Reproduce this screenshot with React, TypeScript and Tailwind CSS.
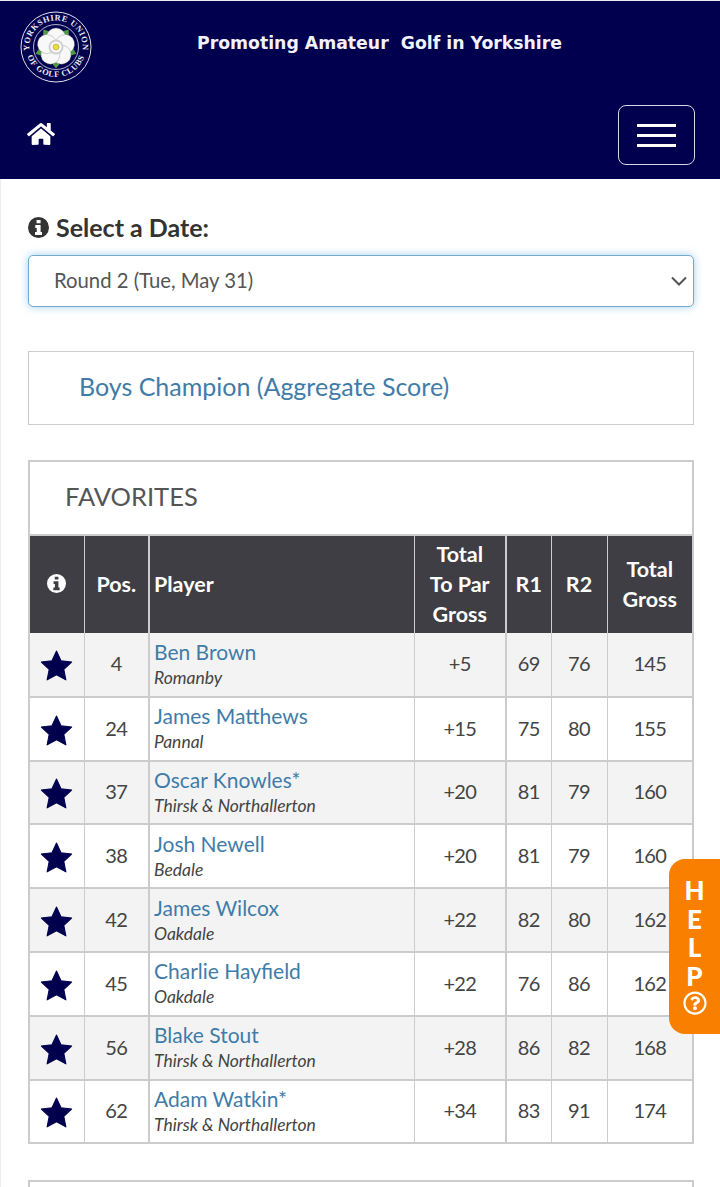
import { FaHome, FaRegQuestionCircle } from "react-icons/fa";

const PLAYERS = [
  { pos: 4, name: "Ben Brown", club: "Romanby", par: "+5", r1: 69, r2: 76, total: 145 },
  { pos: 24, name: "James Matthews", club: "Pannal", par: "+15", r1: 75, r2: 80, total: 155 },
  { pos: 37, name: "Oscar Knowles*", club: "Thirsk & Northallerton", par: "+20", r1: 81, r2: 79, total: 160 },
  { pos: 38, name: "Josh Newell", club: "Bedale", par: "+20", r1: 81, r2: 79, total: 160 },
  { pos: 42, name: "James Wilcox", club: "Oakdale", par: "+22", r1: 82, r2: 80, total: 162 },
  { pos: 45, name: "Charlie Hayfield", club: "Oakdale", par: "+22", r1: 76, r2: 86, total: 162 },
  { pos: 56, name: "Blake Stout", club: "Thirsk & Northallerton", par: "+28", r1: 86, r2: 82, total: 168 },
  { pos: 62, name: "Adam Watkin*", club: "Thirsk & Northallerton", par: "+34", r1: 83, r2: 91, total: 174 },
];

const Logo = () => (
  <svg viewBox="0 0 72 72" className="w-[72px] h-[72px] shrink-0">
    <defs>
      <path id="logo-top" d="M 10.5 44 A 26.7 26.7 0 1 1 61.5 44" />
      <path id="logo-bottom" d="M 6 36 A 30 30 0 0 0 66 36" />
    </defs>
    <circle cx="36" cy="36" r="35" fill="#00004f" stroke="#e0e0ee" strokeWidth="1" />
    <circle cx="36" cy="36" r="22.5" fill="none" stroke="#e0e0ee" strokeWidth="0.8" />
    <text fill="#eeeef6" fontSize="8.3" fontWeight="700" fontFamily="'Liberation Serif', serif" letterSpacing="0.7">
      <textPath href="#logo-top" startOffset="50%" textAnchor="middle">YORKSHIRE UNION</textPath>
    </text>
    <text fill="#eeeef6" fontSize="8.3" fontWeight="700" fontFamily="'Liberation Serif', serif" letterSpacing="0.7">
      <textPath href="#logo-bottom" startOffset="50%" textAnchor="middle">OF GOLF CLUBS</textPath>
    </text>
    {[0, 72, 144, 216, 288].map((a) => (
      <path key={a} d="M36 30 L32.5 19 L36 14.5 L39.5 19 Z" fill="#4f9a45" transform={`rotate(${a + 36} 36 36)`} />
    ))}
    {[0, 72, 144, 216, 288].map((a) => (
      <circle key={a} cx="36" cy="26.5" r="9.5" fill="#f8f8f8" stroke="#777" strokeWidth="0.3" transform={`rotate(${a} 36 36)`} />
    ))}
    <circle cx="36" cy="36" r="7.5" fill="#cfcfcf" />
    <circle cx="36" cy="36" r="5.6" fill="#f8f8f8" />
    <circle cx="36" cy="36" r="3" fill="#eedd33" stroke="#555" strokeWidth="0.3" />
  </svg>
);

const Star = () => (
  <svg viewBox="0 0 32 31" className="w-[33px] h-[32px] mx-auto mt-[6px] text-[#00004f]">
    <path
      d="M16 1 L20.4 10.4 L30.7 11.7 L23.1 18.8 L25.1 29 L16 24 L6.9 29 L8.9 18.8 L1.3 11.7 L11.6 10.4 Z"
      fill="currentColor"
      stroke="currentColor"
      strokeWidth="1"
      strokeLinejoin="round"
    />
  </svg>
);

// font awesome 4 style info circle, the react-icons one has a thinner i
const InfoIcon = ({ className }: { className: string }) => (
  <svg viewBox="0 0 24 24" className={className}>
    <path
      fillRule="evenodd"
      fill="currentColor"
      d="M12 0a12 12 0 1 0 0 24a12 12 0 0 0 0-24z M9.8 3.5h4.6v3.6H9.8z M8.3 9h6.1v8h1.6v3.5H8v-3.5h2v-4.5H8.3z"
    />
  </svg>
);

export default function App() {
  return (
    <div className="w-[720px] h-[1187px] overflow-hidden relative bg-white font-['Lato',sans-serif] text-[#333]">
      {/* Header */}
      <header className="h-[179px] bg-[#00004f] border-t border-[#e8e8f0] px-[20px] pt-[10px]">
        <div className="flex items-start">
          <Logo />
          <p className="ml-[105px] mt-[21px] font-['DejaVu_Sans',sans-serif] font-bold text-[17.3px] leading-[22px] text-[#f2f2f8] whitespace-pre">
            Promoting Amateur  Golf in Yorkshire
          </p>
        </div>
        <div className="flex items-center justify-between mt-[22px] pl-[7px] pr-[5px]">
          <FaHome className="text-white w-[28px] h-[28px] -mt-[3px]" />
          <button className="w-[77px] h-[60px] border border-[#d5d5e8] rounded-[8px] flex flex-col items-center justify-center gap-[7px]">
            <span className="block w-[39px] h-[3px] bg-white" />
            <span className="block w-[39px] h-[3px] bg-white" />
            <span className="block w-[39px] h-[3px] bg-white" />
          </button>
        </div>
      </header>

      <main className="h-[1008px] border-l border-[#eeeeee] pl-[27px] pr-[26px] pt-[35px]">
        {/* Date picker */}
        <div className="flex items-center gap-[7px] h-[28px]">
          <InfoIcon className="w-[21px] h-[21px] text-[#333] -mt-[2px]" />
          <span className="text-[25px] leading-[28px] font-bold -mt-[3px]">Select a Date:</span>
        </div>
        <div className="relative mt-[13px]">
          <select
            defaultValue="2"
            className="w-full h-[52px] appearance-none bg-white border border-[#74a9cf] rounded-[5px] pl-[25px] pr-[40px] pb-[2px] text-[20.3px] text-[#555] shadow-[0_0_8px_rgba(102,175,233,0.6)] outline-none"
          >
            <option value="1">Round 1 (Mon, May 30)</option>
            <option value="2">Round 2 (Tue, May 31)</option>
          </select>
          <svg viewBox="0 0 16 10" className="absolute right-[7px] top-[21px] w-[16px] h-[10px] text-[#555]">
            <path d="M1 1.5 L8 8.5 L15 1.5" fill="none" stroke="currentColor" strokeWidth="2" />
          </svg>
        </div>

        {/* Flight title */}
        <div className="mt-[44px] h-[74px] border border-[#ccc] flex items-center pl-[50px] pb-[2px]">
          <a className="text-[25px] text-[#3f7ca8]">Boys Champion (Aggregate Score)</a>
        </div>

        {/* Favorites */}
        <section className="mt-[35px] border-2 border-[#ccc] border-b-0">
          <h2 className="h-[74px] pl-[35px] pb-[4px] flex items-center text-[25.5px] text-[#555] border-b-2 border-[#ccc]">
            FAVORITES
          </h2>
          <table className="w-full table-fixed border-collapse text-[20px] text-[#444]">
            <colgroup>
              <col className="w-[54px]" />
              <col className="w-[65px]" />
              <col className="w-[265px]" />
              <col className="w-[92px]" />
              <col className="w-[45px]" />
              <col className="w-[56px]" />
              <col />
            </colgroup>
            <thead>
              <tr className="h-[97px] bg-[#3f3e44] text-white text-[21.5px] leading-[30px] font-bold [&>th]:pb-[2px]">
                <th className="border-r border-[#ccc]">
                  <InfoIcon className="w-[19px] h-[19px] mx-auto" />
                </th>
                <th className="border-r-2 border-[#ccc]">Pos.</th>
                <th className="border-r border-[#ccc] text-left pl-[4px]">Player</th>
                <th className="border-r-2 border-[#ccc]">
                  Total
                  <br />
                  To Par
                  <br />
                  Gross
                </th>
                <th className="border-r border-[#ccc]">R1</th>
                <th className="border-r border-[#ccc]">R2</th>
                <th>
                  Total
                  <br />
                  Gross
                </th>
              </tr>
            </thead>
            <tbody>
              {PLAYERS.map((p, i) => (
                <tr
                  key={p.pos}
                  className={`h-[63.8px] border-b-2 border-[#ccc] text-center tracking-[-0.7px] [&>td]:pb-[2px] ${i % 2 === 0 ? "bg-[#f3f3f3]" : "bg-white"}`}
                >
                  <td className="border-r border-[#ccc]">
                    <Star />
                  </td>
                  <td className="border-r-2 border-[#ccc]">{p.pos}</td>
                  <td className="border-r border-[#ccc] text-left pl-[4px] pt-[3px] tracking-normal">
                    <a className="block text-[21px] text-[#3f7ca8] leading-[26px]">{p.name}</a>
                    <span className="block text-[17.5px] italic leading-[26px] text-[#444]">{p.club}</span>
                  </td>
                  <td className="border-r-2 border-[#ccc]">{p.par}</td>
                  <td className="border-r border-[#ccc]">{p.r1}</td>
                  <td className="border-r border-[#ccc]">{p.r2}</td>
                  <td>{p.total}</td>
                </tr>
              ))}
            </tbody>
          </table>
        </section>

        {/* Next leaderboard panel, cut off by the viewport */}
        <div className="mt-[36px] h-[40px] border-2 border-[#ccc]" />
      </main>

      {/* Help tab */}
      <div className="absolute right-0 top-[859px] w-[51px] h-[175px] bg-[#f97f00] rounded-l-[16px] flex flex-col items-center pt-[15px] text-white font-black text-[26px]">
        <span className="[writing-mode:vertical-rl] [text-orientation:upright] tracking-[-3.5px] leading-[30px] h-[113px]">HELP</span>
        <FaRegQuestionCircle className="w-[24px] h-[24px] mt-[4px]" />
      </div>
    </div>
  );
}
